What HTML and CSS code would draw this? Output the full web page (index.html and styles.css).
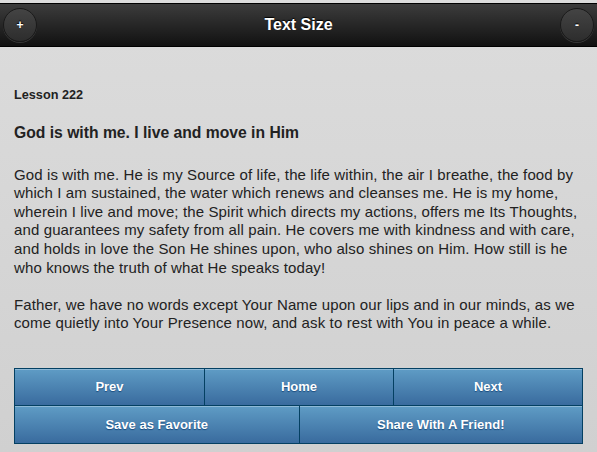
FILE: index.html
```html
<!DOCTYPE html>
<html>
<head>
<meta charset="utf-8">
<link rel="stylesheet" href="styles.css">
</head>
<body>
<div class="page">
  <header class="bar">
    <button class="round">+</button>
    <h1 class="title">Text Size</h1>
    <button class="round">-</button>
  </header>
  <main class="content">
    <p class="lesson">Lesson 222</p>
    <h2 class="heading">God is with me. I live and move in Him</h2>
    <p class="text">God is with me. He is my Source of life, the life within, the air I breathe, the food by which I am sustained, the water which renews and cleanses me. He is my home, wherein I live and move; the Spirit which directs my actions, offers me Its Thoughts, and guarantees my safety from all pain. He covers me with kindness and with care, and holds in love the Son He shines upon, who also shines on Him. How still is he who knows the truth of what He speaks today!</p>
    <p class="text">Father, we have no words except Your Name upon our lips and in our minds, as we come quietly into Your Presence now, and ask to rest with You in peace a while.</p>
    <div class="nav">
      <div class="row three">
        <a class="btn">Prev</a>
        <a class="btn">Home</a>
        <a class="btn">Next</a>
      </div>
      <div class="row two">
        <a class="btn">Save as Favorite</a>
        <a class="btn">Share With A Friend!</a>
      </div>
    </div>
  </main>
</div>
</body>
</html>
```

FILE: styles.css
```css
html, body {
  margin: 0;
  padding: 0;
  height: 100%;
}
body {
  font-family: "Liberation Sans", Arial, sans-serif;
  background: linear-gradient(#dcdcdc, #d0d0d0);
  color: #222;
  overflow: hidden;
}
.page {
  padding-top: 3px;
}
.bar {
  height: 42px;
  border: 1px solid #000;
  border-left: 0;
  border-right: 0;
  background: linear-gradient(#3c3c3c, #111);
  display: flex;
  align-items: center;
  justify-content: space-between;
  padding: 0 3px;
}
.title {
  margin: 0;
  color: #fff;
  font-size: 16px;
  font-weight: bold;
  text-shadow: 0 -1px 1px #000;
}
.round {
  width: 34px;
  height: 34px;
  border-radius: 50%;
  border: 1px solid #1a1a1a;
  background: linear-gradient(#444, #2d2d2d);
  box-shadow: 0 1px 0 rgba(255,255,255,0.15);
  color: #fff;
  font-family: "Liberation Sans", Arial, sans-serif;
  font-size: 12px;
  font-weight: bold;
  padding: 0;
  display: flex;
  align-items: center;
  justify-content: center;
  text-shadow: 0 -1px 1px #000;
}
.content {
  padding: 40px 14px 0;
}
.lesson {
  margin: 0;
  font-size: 12.7px;
  font-weight: bold;
  line-height: 16px;
}
.heading {
  margin: 20px 0 0;
  font-size: 15.7px;
  font-weight: bold;
  line-height: 20px;
}
.text {
  margin: 22.7px 0 0;
  font-size: 15px;
  letter-spacing: 0.12px;
  line-height: 18.6px;
}
.text + .text {
  margin-top: 18.4px;
}
.nav {
  margin-top: 35px;
}
.row {
  display: grid;
  height: 38px;
  border: 1px solid #044062;
  box-sizing: border-box;
}
.row + .row {
  border-top: 0;
}
.three {
  grid-template-columns: 1fr 1fr 1fr;
}
.two {
  grid-template-columns: 1fr 1fr;
}
.btn {
  display: flex;
  align-items: center;
  justify-content: center;
  background: linear-gradient(#5f9cc5, #396b9e);
  box-shadow: inset 0 1px 0 rgba(255,255,255,0.3);
  color: #fff;
  font-size: 13px;
  font-weight: bold;
  text-shadow: 0 1px 1px #194b7e;
  border-left: 1px solid #044062;
}
.btn:first-child {
  border-left: 0;
}
```
